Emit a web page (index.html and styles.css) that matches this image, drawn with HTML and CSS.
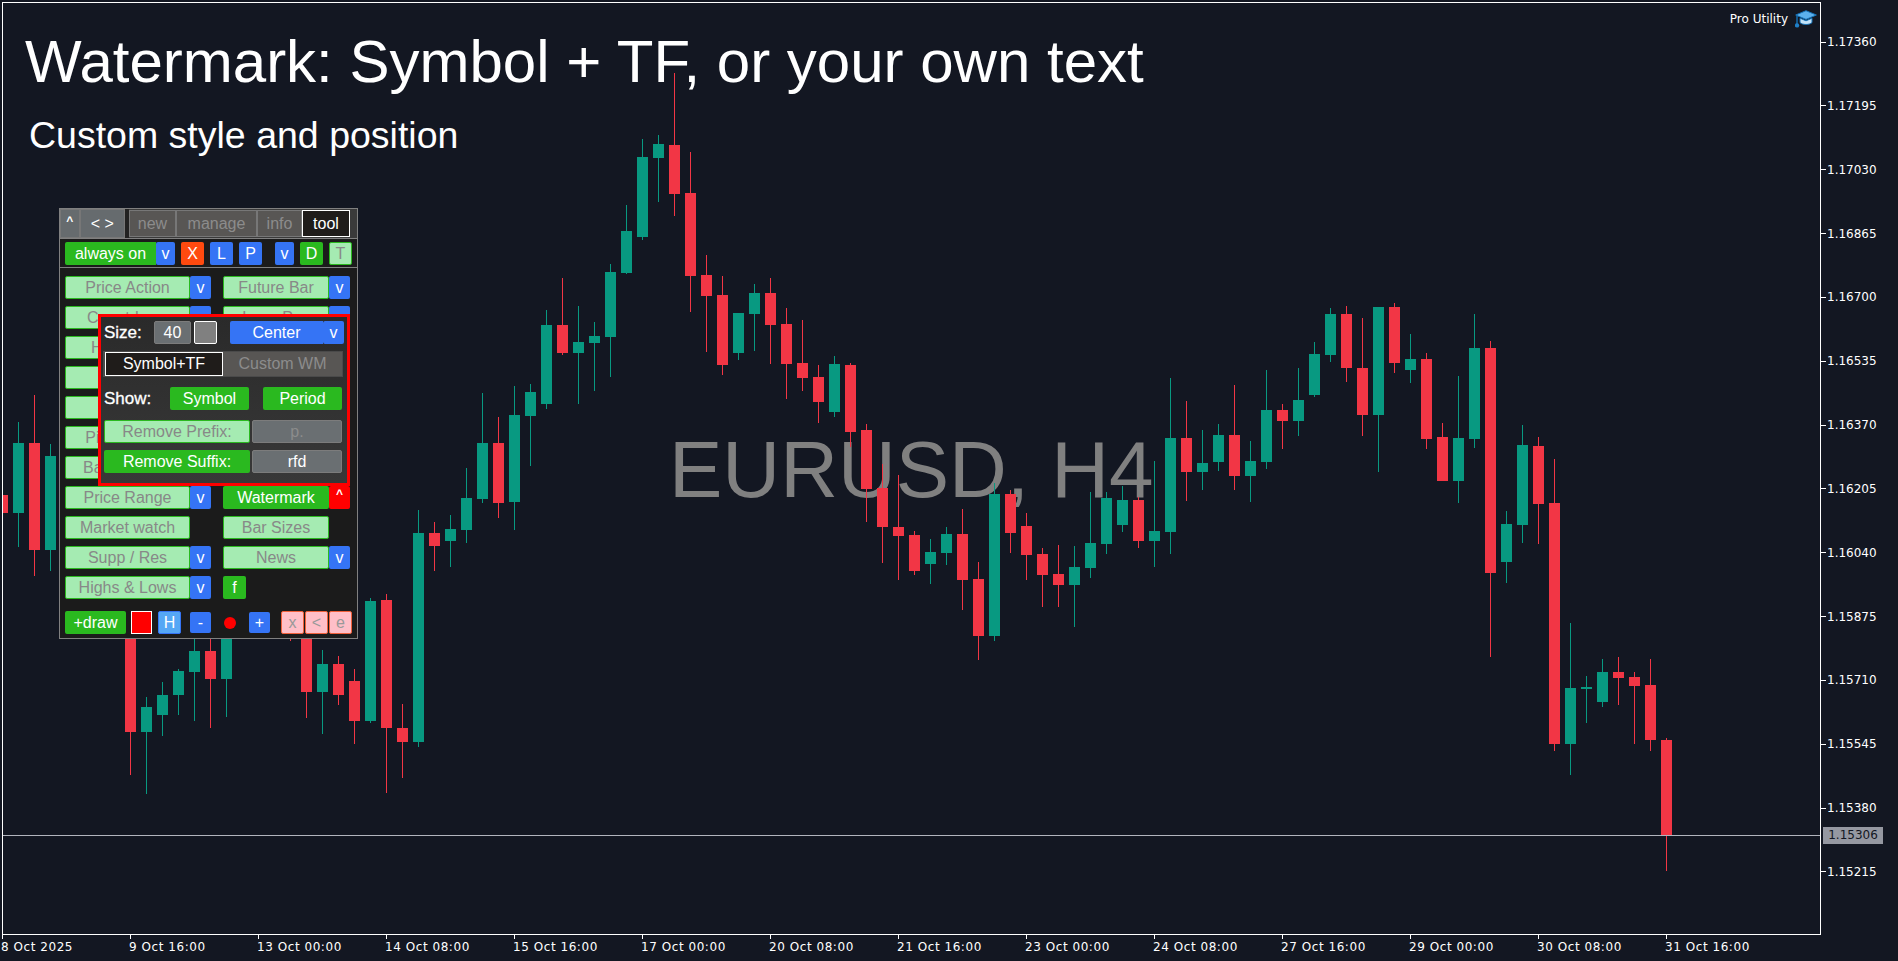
FILE: index.html
```html
<!DOCTYPE html>
<html lang="en">
<head>
<meta charset="utf-8">
<title>Watermark tool</title>
<link rel="stylesheet" href="styles.css">
</head>
<body>
<div class="terminal">
  <div class="workspace">
    <main class="chart">
      <div class="watermark">EURUSD, H4</div>
      <svg id="candles" class="candles" width="1820" height="934" viewBox="0 0 1820 934" shape-rendering="crispEdges"></svg>
      <div class="titles">
        <h1 class="title">Watermark: Symbol + TF, or your own text</h1>
        <p class="subtitle">Custom style and position</p>
      </div>
      <div class="pro-badge">
        <span>Pro Utility</span>
        <svg class="cap-icon" width="22" height="18" viewBox="0 0 22 18">
          <path d="M11 .7 21.4 5 11 9.4 .7 5z" fill="#5cb0ec" stroke="#1572b8"/>
          <path d="M5 8.2v4.4c2.2 2.5 9.8 2.5 12 0V8.2L11 10.8z" fill="#c3e2f8" stroke="#1572b8"/>
          <path d="M2 5.5v9.5" fill="none" stroke="#1572b8" stroke-width="1.4"/>
          <circle cx="2" cy="15.4" r="2.2" fill="#1f7fc8"/>
        </svg>
      </div>
    </main>
    <aside class="price-axis">
      <div class="tick">1.17360</div>
      <div class="tick">1.17195</div>
      <div class="tick">1.17030</div>
      <div class="tick">1.16865</div>
      <div class="tick">1.16700</div>
      <div class="tick">1.16535</div>
      <div class="tick">1.16370</div>
      <div class="tick">1.16205</div>
      <div class="tick">1.16040</div>
      <div class="tick">1.15875</div>
      <div class="tick">1.15710</div>
      <div class="tick">1.15545</div>
      <div class="tick">1.15380</div>
      <div class="tick">1.15215</div>
      <div class="price-tag">1.15306</div>
    </aside>
  </div>
  <footer class="time-axis">
    <div class="time">8 Oct 2025</div>
    <div class="time">9 Oct 16:00</div>
    <div class="time">13 Oct 00:00</div>
    <div class="time">14 Oct 08:00</div>
    <div class="time">15 Oct 16:00</div>
    <div class="time">17 Oct 00:00</div>
    <div class="time">20 Oct 08:00</div>
    <div class="time">21 Oct 16:00</div>
    <div class="time">23 Oct 00:00</div>
    <div class="time">24 Oct 08:00</div>
    <div class="time">27 Oct 16:00</div>
    <div class="time">29 Oct 00:00</div>
    <div class="time">30 Oct 08:00</div>
    <div class="time">31 Oct 16:00</div>
  </footer>

  <section class="panel">
    <div class="panel-head">
      <div class="head-btn head-up">^</div>
      <div class="head-btn head-move">&lt; &gt;</div>
      <div class="tabs">
        <div class="tab tab-new">new</div>
        <div class="tab tab-manage">manage</div>
        <div class="tab tab-info">info</div>
        <div class="tab tab-tool tab-active">tool</div>
      </div>
    </div>
    <div class="panel-status">
      <div class="btn on w-always">always on</div>
      <div class="btn blue w-v">v</div>
      <div class="btn orange sq gap-6">X</div>
      <div class="btn blue sq gap-6">L</div>
      <div class="btn blue sq gap-6">P</div>
      <div class="btn blue w-v gap-13">v</div>
      <div class="btn on sq gap-6">D</div>
      <div class="btn off sq gap-6">T</div>
    </div>
    <div class="tools">
      <div class="cell"><div class="btn off tool-l">Price Action</div><div class="btn blue drop">v</div></div>
      <div class="cell"><div class="btn off tool-r">Future Bar</div><div class="btn blue drop">v</div></div>
      <div class="cell"><div class="btn off tool-l">Countdown</div><div class="btn blue drop">v</div></div>
      <div class="cell"><div class="btn off tool-r">Long Pos</div><div class="btn blue drop">v</div></div>
      <div class="cell cell-wide"><div class="btn off tool-l">Histogram</div></div>
      <div class="cell cell-wide"><div class="btn off tool-l">Trend</div></div>
      <div class="cell cell-wide"><div class="btn off tool-l">Volume</div></div>
      <div class="cell cell-wide"><div class="btn off tool-l">Pivot Points</div></div>
      <div class="cell cell-wide"><div class="btn off tool-l">Bar Patterns</div></div>
      <div class="cell"><div class="btn off tool-l">Price Range</div><div class="btn blue drop">v</div></div>
      <div class="cell"><div class="btn on tool-r">Watermark</div><div class="btn red drop caret">^</div></div>
      <div class="cell"><div class="btn off tool-l">Market watch</div></div>
      <div class="cell"><div class="btn off tool-r">Bar Sizes</div></div>
      <div class="cell"><div class="btn off tool-l">Supp / Res</div><div class="btn blue drop">v</div></div>
      <div class="cell"><div class="btn off tool-r">News</div><div class="btn blue drop">v</div></div>
      <div class="cell"><div class="btn off tool-l">Highs &amp; Lows</div><div class="btn blue drop">v</div></div>
      <div class="cell"><div class="btn on sq">f</div></div>
    </div>
    <div class="panel-draw">
      <div class="btn on w-draw">+draw</div>
      <div class="swatch-red"></div>
      <div class="btn sky sq">H</div>
      <div class="btn blue small">-</div>
      <div class="dot-slot"><span class="dot"></span></div>
      <div class="btn blue small">+</div>
      <div class="btn pink sq gap-x">x</div>
      <div class="btn pink sq gap-1">&lt;</div>
      <div class="btn pink sq gap-1">e</div>
    </div>

    <div class="popup">
      <div class="pop-row pop-size">
        <div class="pop-label w-size">Size:</div>
        <div class="btn field w-num">40</div>
        <div class="swatch-gray"></div>
        <div class="btn blue w-center">Center</div>
        <div class="btn blue drop">v</div>
      </div>
      <div class="pop-tabs">
        <div class="pop-tab pop-tab-active">Symbol+TF</div>
        <div class="pop-tab">Custom WM</div>
      </div>
      <div class="pop-row pop-show">
        <div class="pop-label w-show">Show:</div>
        <div class="btn on w-part">Symbol</div>
        <div class="btn on w-part gap-14">Period</div>
      </div>
      <div class="pop-row pop-prefix">
        <div class="btn off w-remove">Remove Prefix:</div>
        <div class="btn field faded w-affix">p.</div>
      </div>
      <div class="pop-row pop-suffix">
        <div class="btn on w-remove">Remove Suffix:</div>
        <div class="btn field w-affix">rfd</div>
      </div>
    </div>
  </section>
</div>
<script src="chart.js"></script>
</body>
</html>
```
FILE: styles.css
```css
html, body { margin: 0; padding: 0; background: #131722; }
.terminal {
  position: relative;
  width: 1898px;
  height: 961px;
  overflow: hidden;
  background: #131722;
  color: #fff;
  font-family: "DejaVu Sans", sans-serif;
  font-size: 12px;
}

/* chart frame */
.workspace { display: flex; height: 933px; padding: 2px 0 0 2px; }
.chart {
  position: relative;
  flex: 0 0 1819px;
  box-sizing: border-box;
  border: 1px solid #fff;
  overflow: hidden;
}
.candles { position: absolute; left: -3px; top: -3px; }
.watermark {
  position: absolute;
  left: 666px;
  top: 427px;
  font: 80px/80px "Liberation Sans", Arial, sans-serif;
  color: #808080;
  white-space: nowrap;
}
.titles {
  position: absolute;
  left: 22px;
  top: 29px;
  font-family: "Liberation Sans", Arial, sans-serif;
}
.title { margin: 0; font-size: 60px; line-height: 60px; font-weight: 400; white-space: nowrap; }
.subtitle { margin: 24px 0 0 4px; font-size: 37.5px; line-height: 38px; white-space: nowrap; }
.pro-badge {
  position: absolute;
  right: 3px;
  top: 7px;
  display: flex;
  align-items: center;
  gap: 7px;
  line-height: 18px;
}

/* price axis */
.price-axis {
  position: relative;
  flex: 1;
  display: flex;
  flex-direction: column;
  justify-content: space-between;
  padding: 32px 0 55px;
}
.tick { display: flex; align-items: center; height: 16px; line-height: 16px; }
.tick::before { content: ""; width: 5px; height: 1px; margin-right: 1px; background: #fff; }
.price-tag {
  position: absolute;
  left: 2px;
  top: 825px;
  width: 60px;
  height: 17px;
  line-height: 17px;
  text-align: center;
  background: #9598a1;
  color: #131722;
}

/* time axis */
.time-axis {
  display: grid;
  grid-template-columns: repeat(14, 128px);
  margin-left: 2px;
  height: 26px;
}
.time { position: relative; padding-top: 4px; text-indent: -1px; line-height: 16px; white-space: nowrap; letter-spacing: .55px; }
.time::before { content: ""; position: absolute; left: 0; top: 0; width: 1px; height: 4px; background: #fff; }

/* tool panel */
.panel {
  position: absolute;
  left: 59px;
  top: 208px;
  width: 299px;
  height: 431px;
  box-sizing: border-box;
  border: 1px solid #808080;
  background: #1b1b1b;
  font-family: "Liberation Sans", Arial, sans-serif;
  font-size: 16px;
}
.panel-head { display: flex; height: 29px; border-bottom: 1px solid #808080; background: #222; }
.head-btn {
  display: flex;
  align-items: center;
  justify-content: center;
  box-sizing: border-box;
  height: 29px;
  background: #666b6e;
  border: 1px solid #777;
  color: #fff;
}
.head-up { width: 20px; font-size: 12px; font-weight: 700; padding-bottom: 5px; }
.head-move { width: 46px; margin-right: 4px; }
.tabs { display: flex; flex: 1; padding: 1px 7px 1px 0; background: #3a3a3a; }
.tab {
  display: flex;
  align-items: center;
  justify-content: center;
  box-sizing: border-box;
  background: #585654;
  border: 1px solid #777;
  color: #8c8c8c;
}
.tab-new { width: 47px; }
.tab-manage { width: 81px; }
.tab-info { width: 45px; }
.tab-tool { width: 48px; }
.tab-active { background: #1f1c1a; border-color: #fff; color: #fff; }

.panel-status { display: flex; height: 25px; padding: 3px 0 0 5px; border-bottom: 1px solid #808080; }
.btn {
  display: flex;
  align-items: center;
  justify-content: center;
  flex: none;
  box-sizing: border-box;
  height: 23px;
  border-radius: 2px;
  white-space: nowrap;
}
.on { background: #2ab91f; color: #fff; }
.off { background: #a5ebb2; border: 1px solid #2ab91f; color: #888; }
.blue { background: #3574f5; color: #fff; }
.red { background: #f00; color: #fff; }
.orange { background: #ff4a0f; color: #fff; }
.sky { background: #55a7f5; border: 1px solid #3574f5; color: #fff; }
.pink { background: #ffbfc8; border: 1px solid #f0603a; color: #999; }
.field { background: #6a6f72; border: 1px solid #7c7c7c; color: #fff; }
.faded { color: #8c8c8c; }
.sq { width: 23px; }
.w-always { width: 91px; border-radius: 2px 0 0 2px; }
.w-v { width: 19px; }
.gap-1 { margin-left: 1px; }
.gap-6 { margin-left: 6px; }
.gap-13 { margin-left: 13px; }
.gap-14 { margin-left: 14px; }
.gap-x { margin-left: 11px; }

.tools {
  display: grid;
  grid-template-columns: 158px 127px;
  grid-auto-rows: 23px;
  row-gap: 7px;
  padding: 8px 0 0 5px;
}
.cell { display: flex; }
.cell-wide { grid-column: 1 / -1; }
.tool-l { width: 125px; }
.tool-r { width: 106px; }
.drop { width: 21px; }
.caret { align-items: flex-start; font-size: 12px; font-weight: 700; padding-top: 1px; }

.panel-draw { display: flex; align-items: center; height: 23px; margin-top: 12px; padding-left: 5px; }
.w-draw { width: 61px; }
.swatch-red {
  width: 21px;
  height: 23px;
  margin: 0 6px 0 5px;
  box-sizing: border-box;
  background: #f00;
  border: 1px solid #fff;
}
.small { width: 21px; height: 21px; margin-left: 9px; }
.small + .dot-slot + .small { margin-left: 0; }
.dot-slot { display: flex; justify-content: center; width: 38px; }
.dot { width: 12px; height: 12px; border-radius: 50%; background: #f00; }

/* watermark settings popup */
.popup {
  position: absolute;
  left: 38px;
  top: 105px;
  width: 252px;
  height: 172px;
  box-sizing: border-box;
  border: 3px solid #f00;
  background: linear-gradient(#2a2a2a, #383838);
  padding: 4px 0 0 3px;
}
.pop-row { display: flex; align-items: center; }
.pop-label { font-size: 17px; line-height: 23px; color: #fff; -webkit-text-stroke: .3px #fff; }
.w-size { width: 50px; }
.w-show { width: 66px; }
.w-num { width: 37px; }
.swatch-gray {
  width: 23px;
  height: 23px;
  margin: 0 13px 0 3px;
  box-sizing: border-box;
  border: 1px solid #fff;
  border-radius: 2px;
  background: #808080;
}
.w-center { width: 93px; border-radius: 2px 0 0 2px; }
.pop-tabs {
  display: flex;
  width: 240px;
  height: 26px;
  margin: 7px 0 0 -1px;
  box-sizing: border-box;
  padding: 1px 1px 1px 2px;
  background: #4a4a4a;
}
.pop-tab {
  display: flex;
  align-items: center;
  justify-content: center;
  width: 119px;
  box-sizing: border-box;
  background: #585654;
  color: #8c8c8c;
}
.pop-tab-active { width: 118px; background: #1f1c1a; border: 1px solid #fff; color: #fff; }
.pop-show { margin-top: 10px; }
.w-part { width: 79px; }
.pop-prefix { margin-top: 10px; gap: 2px; }
.pop-suffix { margin-top: 7px; gap: 2px; }
.w-remove { width: 146px; }
.w-affix { width: 90px; }
```
FILE: chart.js
```js
// [colour, wick top, body top, body bottom, wick bottom]; bars are 16px apart, first at x = 2
var bars = [
  ['r',490,495,513,520],['g',422,443,513,547],['r',395,443,550,576],['g',444,456,550,571],
  null,null,null,null,
  ['r',600,620,732,775],['g',697,707,732,794],['g',682,695,715,736],['g',669,671,695,715],
  ['g',620,651,672,721],['r',620,651,679,728],['g',620,630,679,717],
  null,null,null,
  ['r',600,610,630,641],['r',600,620,692,718],['g',650,664,692,734],['r',656,664,695,705],
  ['r',669,681,721,744],['g',598,601,721,723],['r',594,600,728,793],['r',704,728,742,778],
  ['g',510,533,742,747],['r',522,533,546,571],['g',515,529,541,567],['g',468,498,530,543],
  ['g',393,443,499,503],['r',417,443,503,518],['g',386,415,502,530],['g',384,392,416,466],
  ['g',310,325,404,409],['r',278,325,353,355],['g',306,342,353,404],['g',322,336,343,391],
  ['g',264,272,337,377],['g',205,231,273,274],['g',139,157,237,240],['g',135,144,158,202],
  ['r',73,145,194,216],['r',152,193,276,312],['r',255,275,296,352],['r',276,295,365,375],
  ['g',313,313,353,360],['g',284,293,314,351],['r',278,293,325,364],['r',308,324,364,399],
  ['r',320,363,378,391],['r',365,377,402,423],['g',356,364,412,417],['r',363,365,432,447],
  ['r',424,430,489,522],['r',464,488,527,563],['r',475,527,536,580],['r',531,535,571,575],
  ['g',539,552,564,584],['g',527,534,553,565],['r',509,534,580,610],['r',562,579,636,660],
  ['g',483,494,636,641],['r',490,494,533,553],['r',513,526,555,580],['r',548,554,575,607],
  ['r',545,574,585,607],['g',546,567,585,627],['g',492,543,568,578],['g',492,498,544,554],
  ['g',486,500,525,532],['r',497,500,541,548],['g',461,531,541,567],['g',378,438,532,554],
  ['r',401,438,472,501],['g',430,463,472,490],['g',424,435,462,471],['r',385,435,476,490],
  ['g',441,461,476,502],['g',370,410,462,469],['r',404,410,421,449],['g',368,400,421,436],
  ['g',342,354,395,397],['g',308,314,355,362],['r',306,314,368,382],['r',318,368,415,436],
  ['g',307,307,415,472],['r',303,307,363,373],['g',334,359,370,383],['r',353,359,439,449],
  ['r',423,437,481,481],['g',376,438,481,503],['g',314,348,439,448],['r',341,348,573,657],
  ['g',511,524,562,583],['g',425,445,525,543],['r',437,446,504,544],['r',459,503,744,751],
  ['g',623,688,744,775],['g',676,687,689,723],['g',659,672,702,707],['r',657,672,678,705],
  ['r',672,677,686,744],['r',659,685,740,751],['r',738,740,835,871]
];
var NS = 'http://www.w3.org/2000/svg';
var svg = document.getElementById('candles');
function rect(x, y, w, h, fill) {
  var r = document.createElementNS(NS, 'rect');
  r.setAttribute('x', x); r.setAttribute('y', y);
  r.setAttribute('width', w); r.setAttribute('height', h);
  r.setAttribute('fill', fill);
  svg.appendChild(r);
}
bars.forEach(function (b, i) {
  if (!b) return;
  var c = 2 + 16 * i, col = b[0] === 'g' ? '#089981' : '#f23645';
  rect(c, b[1], 1, b[4] - b[1], col);
  rect(c - 5, b[2], 11, Math.max(b[3] - b[2], 1), col);
});
rect(2, 835, 1818, 1, '#b2b5be');
```
